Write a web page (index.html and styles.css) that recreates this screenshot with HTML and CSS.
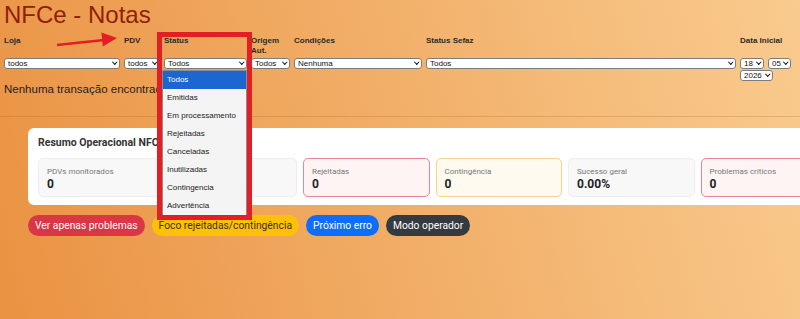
FILE: index.html
```html
<!DOCTYPE html>
<html lang="pt-BR">
<head>
  <meta charset="UTF-8">
  <meta name="viewport" content="width=device-width, initial-scale=1.0">
  <title>NFCe - Notas</title>
  <link rel="stylesheet" href="styles.css">
</head>
<body>

  <h1 class="page-title">NFCe - Notas</h1>

  <!-- Filtros -->
  <div class="filters">
    <div class="filter">
      <label for="loja">Loja</label>
      <span class="select-wrap"><select id="loja"><option>todos</option></select></span>
    </div>
    <div class="filter">
      <label for="pdv">PDV</label>
      <span class="select-wrap"><select id="pdv"><option>todos</option></select></span>
    </div>
    <div class="filter">
      <label for="status">Status</label>
      <span class="select-wrap"><select id="status"><option>Todos</option></select></span>
    </div>
    <div class="filter">
      <label for="origem">Origem Aut.</label>
      <span class="select-wrap"><select id="origem"><option>Todos</option></select></span>
    </div>
    <div class="filter">
      <label for="condicoes">Condições</label>
      <span class="select-wrap"><select id="condicoes"><option>Nenhuma</option></select></span>
    </div>
    <div class="filter">
      <label for="sefaz">Status Sefaz</label>
      <span class="select-wrap"><select id="sefaz"><option>Todos</option></select></span>
    </div>
    <div class="filter">
      <label for="dia">Data Inicial</label>
      <div class="date-selects">
        <span class="select-wrap sel-day"><select id="dia"><option>18</option></select></span>
        <span class="select-wrap sel-month"><select><option>05</option></select></span>
        <span class="select-wrap sel-year"><select><option>2026</option></select></span>
      </div>
    </div>
  </div>

  <p class="empty-msg">Nenhuma transação encontrada.</p>

  <hr class="divider">

  <div class="panel">
    <div class="summary-card">
      <h2>Resumo Operacional NFCe</h2>
      <div class="metrics">
        <div class="metric">
          <span class="metric-label">PDVs monitorados</span>
          <span class="metric-value">0</span>
        </div>
        <div class="metric">
          <span class="metric-label">Emitidas</span>
          <span class="metric-value">0</span>
        </div>
        <div class="metric metric-danger">
          <span class="metric-label">Rejeitadas</span>
          <span class="metric-value">0</span>
        </div>
        <div class="metric metric-warning">
          <span class="metric-label">Contingência</span>
          <span class="metric-value">0</span>
        </div>
        <div class="metric">
          <span class="metric-label">Sucesso geral</span>
          <span class="metric-value">0.00%</span>
        </div>
        <div class="metric metric-danger">
          <span class="metric-label">Problemas críticos</span>
          <span class="metric-value">0</span>
        </div>
      </div>
    </div>

    <div class="actions">
      <button class="btn btn-red">Ver apenas problemas</button>
      <button class="btn btn-yellow">Foco rejeitadas/contingência</button>
      <button class="btn btn-blue">Próximo erro</button>
      <button class="btn btn-dark">Modo operador</button>
    </div>
  </div>

  <!-- Lista aberta do select Status -->
  <ul class="status-list">
    <li class="selected">Todos</li>
    <li>Emitidas</li>
    <li>Em processamento</li>
    <li>Rejeitadas</li>
    <li>Canceladas</li>
    <li>Inutilizadas</li>
    <li>Contingencia</li>
    <li>Advertência</li>
  </ul>

  <!-- Marcações em vermelho -->
  <div class="mark-box"></div>
  <svg class="mark-arrow" width="130" height="60" viewBox="0 0 130 60">
    <line x1="57" y1="45" x2="104" y2="40" stroke="#e31e24" stroke-width="2.5"/>
    <polygon points="117,38 102.8,46.6 101.4,32.6" fill="#e31e24"/>
  </svg>

</body>
</html>
```

FILE: styles.css
```css
html {
  overflow: hidden;
}

body {
  margin: 0;
  padding: 0 4px;
  min-height: 319px;
  position: relative;
  font-family: "Liberation Sans", Arial, sans-serif;
  color: #222;
  background: linear-gradient(75deg, #ea9242 0%, #f9cb8e 100%);
}

.page-title {
  margin: 0;
  padding-top: 1px;
  font-size: 24px;
  line-height: 28px;
  font-weight: normal;
  color: #8e1f0d;
}

/* Filtros */
.filters {
  display: grid;
  grid-template-columns: 116px 36px 83px 39px 128px 310px 52px;
  column-gap: 4px;
  margin-top: 7px;
}

.filter {
  display: flex;
  flex-direction: column;
}

.filter label {
  font-size: 8px;
  line-height: 10px;
  font-weight: bold;
  min-height: 22px;
  color: #2a2a2a;
}

.select-wrap {
  position: relative;
  display: block;
}

.select-wrap select {
  appearance: none;
  -webkit-appearance: none;
  display: block;
  box-sizing: border-box;
  width: 100%;
  height: 11px;
  margin: 0;
  padding: 0 9px 0 3px;
  font: 8px/9px "Liberation Sans", Arial, sans-serif;
  color: #111;
  background: #fff;
  border: 1px solid #7c7c7c;
  border-radius: 3px;
}

/* chevron */
.select-wrap::after {
  content: "";
  position: absolute;
  right: 4px;
  top: 2px;
  width: 2.5px;
  height: 2.5px;
  border-right: 1.5px solid #111;
  border-bottom: 1.5px solid #111;
  transform: rotate(45deg);
  pointer-events: none;
}

.date-selects {
  display: flex;
  flex-wrap: wrap;
  gap: 1px 4px;
}

.date-selects .sel-day { width: 24px; }
.date-selects .sel-month { width: 23px; }
.date-selects .sel-year { width: 33px; }

.empty-msg {
  margin: 1px 0 0;
  font-size: 11.5px;
  line-height: 14px;
  color: #222;
}

.divider {
  margin: 20px -4px 0;
  border: 0;
  border-top: 1px solid rgba(160, 80, 20, 0.22);
}

/* Resumo */
.panel {
  margin: 11px 0 0 24px;
  font-family: "Segoe UI", Roboto, sans-serif;
}

.summary-card {
  box-sizing: border-box;
  width: 840px;
  padding: 8px 10px;
  background: #fff;
  border-radius: 6px;
}

.summary-card h2 {
  margin: 0 0 8px;
  font-size: 10.5px;
  line-height: 14px;
  font-weight: bold;
  color: #333;
}

.metrics {
  display: grid;
  grid-template-columns: repeat(6, 126.5px);
  gap: 6px;
}

.metric {
  display: flex;
  flex-direction: column;
  padding: 8px 8px 5px;
  background: #f8f8f9;
  border: 1px solid #eceef0;
  border-radius: 5px;
}

.metric-danger {
  background: #fff4f4;
  border-color: #e9868e;
}

.metric-warning {
  background: #fffaf0;
  border-color: #f9d193;
}

.metric-label {
  font-size: 8px;
  line-height: 10px;
  color: #777;
}

.metric-value {
  font-size: 12px;
  line-height: 14px;
  font-weight: bold;
  color: #222;
}

.actions {
  display: flex;
  gap: 7px;
  margin-top: 10px;
}

.btn {
  padding: 4px 7px;
  font-family: "Segoe UI", Roboto, sans-serif;
  font-size: 10.3px;
  line-height: 13px;
  border: none;
  border-radius: 11px;
  color: #fff;
  cursor: pointer;
}

.btn-red { background-color: #dc3545; }
.btn-yellow { background-color: #ffc107; color: #3d3200; }
.btn-blue { background-color: #0d6efd; }
.btn-dark { background-color: #343a40; }

/* Lista aberta do Status */
.status-list {
  position: absolute;
  left: 162px;
  top: 70px;
  width: 85px;
  margin: 0;
  padding: 0;
  list-style: none;
  background: #f4f4f4;
  border: 1px solid #8c8c8c;
  box-sizing: border-box;
}

.status-list li {
  height: 18px;
  line-height: 18px;
  padding-left: 4px;
  font-size: 8px;
  color: #222;
}

.status-list li.selected {
  background: #1b66d0;
  color: #fff;
}

/* Marcações */
.mark-box {
  position: absolute;
  left: 157px;
  top: 32px;
  width: 95px;
  height: 188px;
  box-sizing: border-box;
  border: 5px solid #e31e24;
}

.mark-arrow {
  position: absolute;
  left: 0;
  top: 0;
}
```
